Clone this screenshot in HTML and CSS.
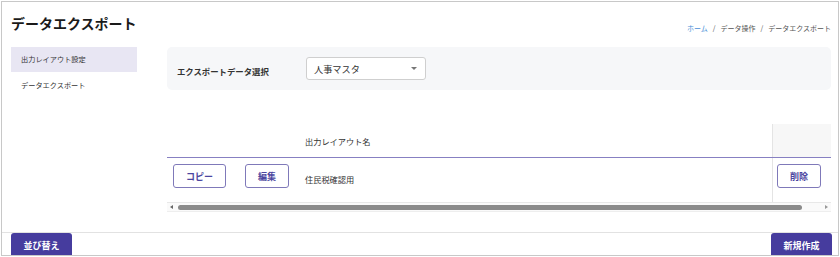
FILE: index.html
```html
<!DOCTYPE html>
<html lang="ja">
<head>
  <meta charset="UTF-8" />
  <meta name="viewport" content="width=device-width, initial-scale=1.0" />
  <title>データエクスポート</title>
  <link rel="stylesheet" href="styles.css">
</head>
<body>
  <div id="frame">
    <div class="page-head">
      <h1>データエクスポート</h1>
      <nav class="crumbs">
        <a href="#">ホーム</a><span class="sep">/</span><span>データ操作</span><span class="sep">/</span><span>データエクスポート</span>
      </nav>
    </div>

    <div class="main">
      <ul class="side-menu">
        <li class="active">出力レイアウト設定</li>
        <li>データエクスポート</li>
      </ul>

      <div class="content">
        <div class="filter">
          <label>エクスポートデータ選択</label>
          <div class="select">
            <span>人事マスタ</span>
            <span class="caret"></span>
          </div>
        </div>

        <div class="grid">
          <div class="grid-row head">
            <div class="cell actions"></div>
            <div class="cell name">出力レイアウト名</div>
            <div class="cell fixed"></div>
          </div>
          <div class="grid-row body">
            <div class="cell actions">
              <button class="btn-line copy">コピー</button>
              <button class="btn-line">編集</button>
            </div>
            <div class="cell name">住民税確認用</div>
            <div class="cell fixed">
              <button class="btn-line">削除</button>
            </div>
          </div>
          <div class="scrollbar">
            <span class="arrow left"></span>
            <span class="thumb"></span>
            <span class="arrow right"></span>
          </div>
        </div>
      </div>
    </div>

    <div class="footer">
      <button class="btn-solid">並び替え</button>
      <button class="btn-solid">新規作成</button>
    </div>
  </div>
</body>
</html>
```

FILE: styles.css
```css
:root {
  --purple: #463c9e;
  --purple-line: #8780c2;
  --lavender: #e8e6f3;
  --panel: #f6f7f9;
  --text: #222;
}

* {
  box-sizing: border-box;
  margin: 0;
  padding: 0;
  font-family: 'Noto Sans CJK JP', 'Noto Sans', sans-serif;
}

body {
  background: #fff;
  color: var(--text);
}

#frame {
  margin: 1px;
  width: 838px;
  height: 255px;
  border: 1px solid #c8c8c8;
  overflow: hidden;
  display: flex;
  flex-direction: column;
}

.page-head {
  flex-shrink: 0;
  height: 45px;
  padding: 0 7px 0 9px;
  display: flex;
  justify-content: space-between;
}

h1 {
  font-size: 14px;
  font-weight: 700;
  line-height: 20px;
  padding-top: 11px;
  color: #1a1a1a;
}

.crumbs {
  font-size: 7px;
  line-height: 10px;
  padding-top: 21px;
  color: #555;
}

.crumbs a {
  color: #4a8fd8;
  text-decoration: none;
}

.crumbs .sep {
  margin: 0 5px;
}

.main {
  flex-shrink: 0;
  height: 185px;
  padding: 0 7px 0 9px;
  display: flex;
  gap: 30px;
}

.side-menu {
  list-style: none;
  width: 126px;
  font-size: 7.2px;
  color: #333;
}

.side-menu li {
  height: 26px;
  line-height: 26px;
  padding-left: 10px;
}

.side-menu li.active {
  height: 25px;
  line-height: 25px;
  background: var(--lavender);
}

.content {
  flex: 1;
}

.filter {
  height: 43px;
  background: var(--panel);
  border-radius: 5px;
  padding-left: 10px;
  display: flex;
  align-items: center;
}

.filter label {
  width: 129px;
  font-size: 8.4px;
  font-weight: 600;
  padding-top: 4px;
  color: #333;
}

.select {
  width: 120px;
  height: 23px;
  background: #fff;
  border: 1px solid #cfcfcf;
  border-radius: 3px;
  padding: 0 8px 0 7px;
  font-size: 9.2px;
  color: #333;
  display: flex;
  align-items: center;
  justify-content: space-between;
}

.caret {
  width: 0;
  height: 0;
  border-left: 3px solid transparent;
  border-right: 3px solid transparent;
  border-top: 3px solid #777;
}

.grid {
  margin-top: 34px;
}

.grid-row {
  display: flex;
}

.grid-row.head {
  height: 34px;
  border-bottom: 1px solid var(--purple-line);
}

.grid-row.body {
  height: 44px;
}

.cell {
  font-size: 8.2px;
  color: #333;
}

.cell.actions {
  width: 138px;
  padding: 6px 0 0 6px;
  display: flex;
  gap: 19px;
  align-items: flex-start;
}

.cell.name {
  flex: 1;
  display: flex;
  align-items: center;
}

.grid-row.body .cell.name {
  align-items: flex-start;
  padding-top: 15px;
}

.cell.fixed {
  width: 59px;
  border-left: 1px solid #e4e4e4;
  padding: 6px 0 0 4px;
}

.grid-row.head .cell.fixed {
  background: #f7f7f7;
}

.btn-line {
  height: 24px;
  width: 44px;
  background: #fff;
  border: 1px solid #7f79b9;
  border-radius: 3px;
  color: #4c46a0;
  font-size: 9px;
  font-weight: 600;
  cursor: pointer;
}

.btn-line.copy {
  width: 53px;
}

.scrollbar {
  height: 10px;
  border-top: 1px solid #e8e8e8;
  border-bottom: 1px solid #eeeeee;
  background: #fafafa;
  display: flex;
  align-items: center;
  padding: 0 3px;
}

.thumb {
  width: 624px;
  height: 5px;
  margin-left: 5px;
  background: #8b8b8b;
  border-radius: 3px;
}

.arrow {
  width: 0;
  height: 0;
  border-top: 2px solid transparent;
  border-bottom: 2px solid transparent;
}

.arrow.left {
  border-right: 3px solid #666;
}

.arrow.right {
  margin-left: auto;
  border-left: 3px solid #999;
}

.footer {
  flex: 1;
  min-height: 0;
  border-top: 1px solid #e2e2e2;
  padding: 0 6px 0 9px;
  display: flex;
  justify-content: space-between;
}

.btn-solid {
  flex-shrink: 0;
  width: 61px;
  height: 24px;
  background: var(--purple);
  color: #fff;
  border: none;
  border-radius: 3px 3px 0 0;
  font-size: 9px;
  font-weight: 700;
  cursor: pointer;
}
```
